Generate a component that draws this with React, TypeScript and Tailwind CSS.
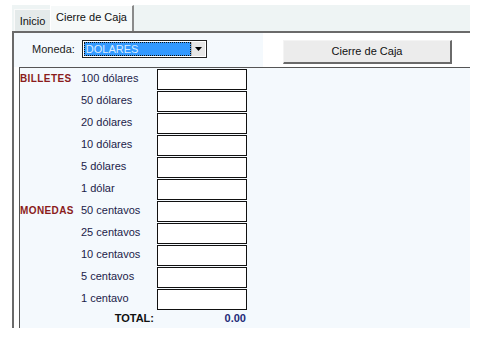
import React from "react";

const rows: { cat?: string; label: string }[] = [
  { cat: "BILLETES", label: "100 dólares" },
  { label: "50 dólares" },
  { label: "20 dólares" },
  { label: "10 dólares" },
  { label: "5 dólares" },
  { label: "1 dólar" },
  { cat: "MONEDAS", label: "50 centavos" },
  { label: "25 centavos" },
  { label: "10 centavos" },
  { label: "5 centavos" },
  { label: "1 centavo" },
];

export default function App() {
  return (
    <div
      className="w-[479px] h-[338px] bg-white pt-[5px] pl-[12px] text-[11px] text-black"
      style={{ fontFamily: '"Liberation Sans", Arial, sans-serif' }}
    >
      <div className="w-[458px] flex flex-col">
        {/* tab strip */}
        <div className="h-[26px] flex items-end bg-[#eef4f4] pl-[2px]">
          <div className="h-[22px] w-[36px] bg-[#e4eaea] border-t border-l border-[#fafafa] flex items-center justify-center pt-[1px] text-[#111]">
            Inicio
          </div>
          <div className="h-[26px] w-[84px] bg-[#f6f9f9] border-t border-l border-white border-r-2 border-r-[#8a8a8a] flex items-start justify-center pt-[3px] text-[#111]">
            Cierre de Caja
          </div>
          <div className="flex-1" />
        </div>
        {/* panel */}
        <div className="h-[297px] border-t-2 border-l-2 border-[#6a6a6a] flex flex-col">
          <div className="h-[34px] flex">
            <div className="w-[249px] bg-[#f4f9fd] flex items-center pb-[2px]">
              <span className="ml-[18px] text-[#222]">Moneda:</span>
              <div className="ml-[7px] w-[125px] h-[18px] border border-[#222] bg-white flex p-[1px]">
                <div className="flex-1 bg-[#3399ff] border border-dotted border-[#111] text-[#d8ecff] leading-[12px] pl-[1px]">
                  DOLARES
                </div>
                <div className="w-[14px] bg-[#e6e6e6] border-l border-[#bbb] flex items-center justify-center">
                  <svg width="7" height="4" viewBox="0 0 7 4">
                    <path d="M0 0h7L3.5 4z" fill="#000" />
                  </svg>
                </div>
              </div>
            </div>
            <div className="flex-1 bg-white flex items-start pt-[7px] pl-[20px]">
              <div className="w-[169px] h-[24px] bg-[#ececec] border-t border-l border-[#f4f4f4] border-r-2 border-b-2 border-r-[#6a6a6a] border-b-[#6a6a6a] flex items-center justify-center text-[#111]">
                Cierre de Caja
              </div>
            </div>
          </div>
          <div className="ml-[5px] flex-1 border-t border-l border-[#555] bg-[#f4f9fd] pt-[1px]">
            <div className="grid grid-cols-[61px_76px_90px]">
              {rows.map((r, i) => (
                <React.Fragment key={i}>
                  <div className="h-[22px] flex items-center pb-[3px] text-[10px] font-bold text-[#8a1c1c] tracking-[0.4px]">
                    {r.cat ?? ""}
                  </div>
                  <div className="h-[22px] flex items-center pb-[3px] text-[#1c1c4a]">{r.label}</div>
                  <div className="h-[22px]">
                    <div className="h-[21px] bg-white border border-[#111]" />
                  </div>
                </React.Fragment>
              ))}
              <div />
              <div className="h-[15px] flex items-center justify-end pr-[3px] font-bold text-[#111]">TOTAL:</div>
              <div className="h-[15px] flex items-center justify-end pr-[1px] font-bold text-[#1e2a78]">0.00</div>
            </div>
          </div>
        </div>
      </div>
    </div>
  );
}
